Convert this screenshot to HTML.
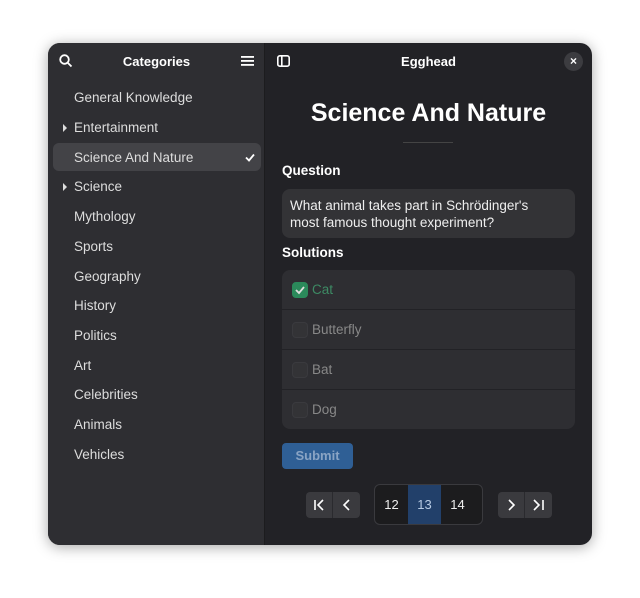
<!DOCTYPE html>
<html><head><style>
*{box-sizing:border-box;margin:0;padding:0}
body{width:640px;height:598px;background:#fff;font-family:"Liberation Sans",sans-serif;position:relative;overflow:hidden}
.win{position:absolute;left:48px;top:43px;width:544px;height:502px;border-radius:12px;overflow:hidden;background:#222226;box-shadow:0 2px 14px rgba(0,0,0,.35)}
.side{position:absolute;left:0;top:0;width:217px;height:502px;background:#2e2e32;border-right:1px solid #1c1c1e}
.abs{position:absolute}
.t{color:#fff;font-size:13px}
.item{position:absolute;left:26px;color:#ddd;font-size:13.5px}
.sel{position:absolute;left:5px;top:100px;width:208px;height:28px;background:#434347;border-radius:6px}
.tri{position:absolute;left:15px;width:0;height:0;border-left:4px solid #ddd;border-top:4px solid transparent;border-bottom:4px solid transparent}
.row{position:absolute;left:0;width:293px;height:40px;border-bottom:1px solid #222226;color:#888;font-size:13.5px;padding:12px 0 0 30px}
.cb{position:absolute;left:10px;top:12px;width:16px;height:16px;border-radius:4px;background:#333336;border:1px solid #3a3a3e}
.btn{position:absolute;background:#3a3a3e;height:26px;width:27px}
</style></head><body>
<div class="win">
 <div class="side">
  <svg class="abs" style="left:11px;top:11px" width="14" height="14" viewBox="0 0 14 14"><circle cx="5.5" cy="5.5" r="4.3" stroke="#fff" stroke-width="1.8" fill="none"/><line x1="8.7" y1="8.7" x2="12.5" y2="12.5" stroke="#fff" stroke-width="1.8"/></svg>
  <div class="abs t" style="left:0;width:217px;text-align:center;top:11px;font-weight:bold">Categories</div>
  <svg class="abs" style="left:193px;top:12px" width="13" height="12"><rect y="1" width="13" height="1.8" fill="#fff"/><rect y="5" width="13" height="1.8" fill="#fff"/><rect y="9" width="13" height="1.8" fill="#fff"/></svg>
  <div class="sel"></div>
  <div class="item" style="top:47px">General Knowledge</div>
  <div class="tri" style="top:81px"></div><div class="item" style="top:77px">Entertainment</div>
  <div class="item" style="top:107px">Science And Nature</div>
  <svg class="abs" style="left:197px;top:110px" width="10" height="9"><path d="M1 4.5L4 7.5L9 1.5" stroke="#fff" stroke-width="1.8" fill="none"/></svg>
  <div class="tri" style="top:140px"></div><div class="item" style="top:136px">Science</div>
  <div class="item" style="top:166px">Mythology</div>
  <div class="item" style="top:196px">Sports</div>
  <div class="item" style="top:226px">Geography</div>
  <div class="item" style="top:255px">History</div>
  <div class="item" style="top:285px">Politics</div>
  <div class="item" style="top:315px">Art</div>
  <div class="item" style="top:344px">Celebrities</div>
  <div class="item" style="top:374px">Animals</div>
  <div class="item" style="top:404px">Vehicles</div>
 </div>
 <svg class="abs" style="left:229px;top:12px" width="13" height="12"><rect x="0.8" y="0.8" width="11.4" height="10.4" rx="2" stroke="#fff" stroke-width="1.6" fill="none"/><rect x="4" y="1" width="1.6" height="10" fill="#fff"/></svg>
 <div class="abs t" style="left:217px;width:327px;text-align:center;top:11px;font-weight:bold">Egghead</div>
 <div class="abs" style="left:516px;top:9px;width:19px;height:19px;border-radius:50%;background:#3c3c40;color:#fff;font-size:12px;text-align:center;line-height:19px;font-weight:bold">×</div>
 <div class="abs" style="left:217px;width:327px;text-align:center;top:56px;color:#fff;font-size:25px;font-weight:bold">Science And Nature</div>
 <div class="abs" style="left:355px;top:99px;width:50px;height:1px;background:#444"></div>
 <div class="abs t" style="left:234px;top:120px;font-weight:bold;font-size:13.5px">Question</div>
 <div class="abs" style="left:234px;top:146px;width:293px;height:49px;background:#333336;border-radius:8px;color:#eee;font-size:13.5px;padding:8px 30px 8px 8px;line-height:17px">What animal takes part in Schrödinger's most famous thought experiment?</div>
 <div class="abs t" style="left:234px;top:202px;font-weight:bold;font-size:13.5px">Solutions</div>
 <div class="abs" style="left:234px;top:227px;width:293px;height:159px;background:#2e2e32;border-radius:8px;overflow:hidden">
  <div class="row" style="top:0;color:#3d8a64"><div class="cb" style="background:#2b8a5b;border-color:#2b8a5b"><svg width="14" height="14" style="position:absolute;left:0;top:0"><path d="M3 7L6 10L11 4" stroke="#ddd" stroke-width="1.8" fill="none"/></svg></div>Cat</div>
  <div class="row" style="top:40px"><div class="cb"></div>Butterfly</div>
  <div class="row" style="top:80px"><div class="cb"></div>Bat</div>
  <div class="row" style="top:120px;border:0"><div class="cb"></div>Dog</div>
 </div>
 <div class="abs" style="left:234px;top:400px;width:71px;height:26px;background:#2f5f95;border-radius:4px;color:#8aa4c4;font-size:13px;font-weight:bold;text-align:center;line-height:26px">Submit</div>
 <div class="btn" style="left:258px;top:449px;border-radius:4px 0 0 4px;border-right:1px solid #2a2a2e"><svg width="27" height="26"><path d="M9 8V18M17 8L12 13L17 18" stroke="#fff" stroke-width="1.6" fill="none"/></svg></div>
 <div class="btn" style="left:285px;top:449px;border-radius:0 4px 4px 0"><svg width="27" height="26"><path d="M16 8L11 13L16 18" stroke="#fff" stroke-width="1.6" fill="none"/></svg></div>
 <div class="abs" style="left:326px;top:441px;width:109px;height:41px;background:#1c1c1e;border:1px solid #3a3a3e;border-radius:6px;overflow:hidden;color:#eee;font-size:13px">
  <div class="abs" style="left:0;width:33px;top:12px;text-align:center">12</div>
  <div class="abs" style="left:33px;width:33px;top:0;height:41px;background:#22406a;color:#b8cbe4;text-align:center;padding-top:12px">13</div>
  <div class="abs" style="left:66px;width:33px;top:12px;text-align:center">14</div>
 </div>
 <div class="btn" style="left:450px;top:449px;border-radius:4px 0 0 4px;border-right:1px solid #2a2a2e"><svg width="27" height="26"><path d="M11 8L16 13L11 18" stroke="#fff" stroke-width="1.6" fill="none"/></svg></div>
 <div class="btn" style="left:477px;top:449px;border-radius:0 4px 4px 0"><svg width="27" height="26"><path d="M9 8L14 13L9 18M18 8V18" stroke="#fff" stroke-width="1.6" fill="none"/></svg></div>
</div>
</body></html>
